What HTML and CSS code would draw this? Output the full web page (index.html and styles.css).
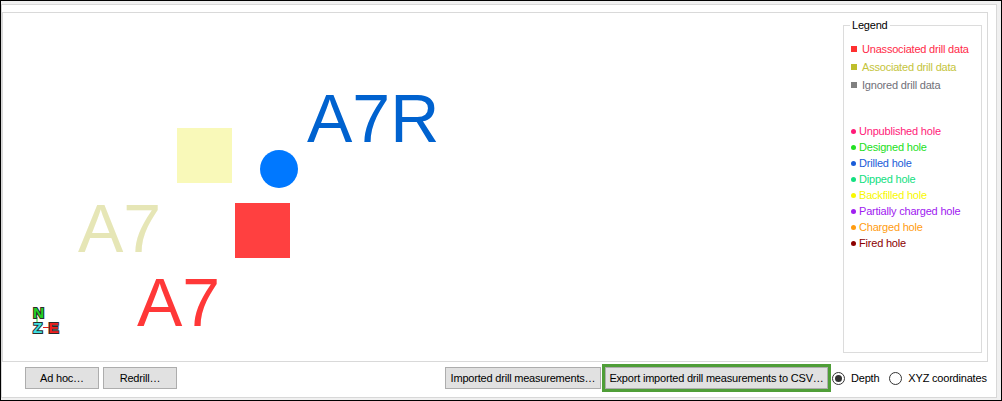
FILE: index.html
```html
<!DOCTYPE html>
<html lang="en">
<head>
<meta charset="utf-8">
<title>Drill data</title>
<link rel="stylesheet" href="styles.css">
</head>
<body>
<div class="window">
  <div class="panel">
    <div class="canvas">
      <div class="shape sq-yellow"></div>
      <div class="shape sq-red"></div>
      <div class="shape dot-blue"></div>
      <div class="label lbl-a7r">A7R</div>
      <div class="label lbl-a7-pale">A7</div>
      <div class="label lbl-a7-red">A7</div>
      <svg class="compass" width="32" height="34" viewBox="0 0 32 34">
        <line x1="7" y1="14" x2="7" y2="20" stroke="#22cc22" stroke-width="1"/>
        <line x1="13" y1="24.5" x2="19" y2="24.5" stroke="#e02020" stroke-width="1"/>
        <text x="3" y="15" class="ax ax-n">N</text>
        <text x="3" y="30" class="ax ax-z">Z</text>
        <text x="18.5" y="30" class="ax ax-e">E</text>
      </svg>

      <fieldset class="legend">
        <legend>Legend</legend>
        <ul class="keys">
          <li class="key c-unassoc"><i class="sw"></i>Unassociated drill data</li>
          <li class="key c-assoc"><i class="sw"></i>Associated drill data</li>
          <li class="key c-ignored"><i class="sw"></i>Ignored drill data</li>
        </ul>
        <ul class="keys holes">
          <li class="hole c-unpub"><i class="pt"></i>Unpublished hole</li>
          <li class="hole c-designed"><i class="pt"></i>Designed hole</li>
          <li class="hole c-drilled"><i class="pt"></i>Drilled hole</li>
          <li class="hole c-dipped"><i class="pt"></i>Dipped hole</li>
          <li class="hole c-backfill"><i class="pt"></i>Backfilled hole</li>
          <li class="hole c-partial"><i class="pt"></i>Partially charged hole</li>
          <li class="hole c-charged"><i class="pt"></i>Charged hole</li>
          <li class="hole c-fired"><i class="pt"></i>Fired hole</li>
        </ul>
      </fieldset>
    </div>

    <div class="bar">
      <button class="btn btn-adhoc">Ad hoc…</button>
      <button class="btn btn-redrill">Redrill…</button>
      <button class="btn btn-imported">Imported drill measurements…</button>
      <div class="focus-frame">
        <button class="btn btn-export">Export imported drill measurements to CSV…</button>
      </div>
      <div class="radios">
        <label class="opt"><span class="radio on"></span>Depth</label>
        <label class="opt"><span class="radio"></span>XYZ coordinates</label>
      </div>
    </div>
  </div>
</div>
</body>
</html>
```

FILE: styles.css
```css
html, body {
  margin: 0;
  padding: 0;
  background: #ffffff;
}

.window {
  box-sizing: border-box;
  width: 1002px;
  height: 401px;
  border: 1px solid #000;
  background: #f0f0f0;
  padding: 3px 4px 2px 0;
  font-family: "Liberation Sans", Arial, sans-serif;
  font-size: 11px;
  letter-spacing: -0.2px;
  color: #000;
}

.panel {
  box-sizing: border-box;
  height: 100%;
  border: 1px solid #d8d8d8;
  background: #fff;
  padding: 7px 8px 0 0;
  display: flex;
  flex-direction: column;
}

/* drawing area */
.canvas {
  position: relative;
  box-sizing: border-box;
  height: 350px;
  border: 1px solid #d9d9d9;
  padding: 6px 5px 8px;
  display: flex;
  justify-content: flex-end;
  overflow: hidden;
}

.shape {
  position: absolute;
}

.sq-yellow {
  left: 174px;
  top: 115px;
  width: 55px;
  height: 55px;
  background: #f9f9b9;
}

.sq-red {
  left: 232px;
  top: 190px;
  width: 55px;
  height: 55px;
  background: #ff4040;
}

.dot-blue {
  left: 257px;
  top: 137px;
  width: 38px;
  height: 38px;
  border-radius: 50%;
  background: #0078ff;
}

.label {
  position: absolute;
  font-family: "Liberation Sans", Arial, sans-serif;
  font-size: 68px;
  line-height: 68px;
  letter-spacing: 0;
  white-space: nowrap;
}

.lbl-a7r {
  left: 304px;
  top: 71px;
  color: #0062cf;
}

.lbl-a7-pale {
  left: 75px;
  top: 181px;
  color: #e6e6b6;
}

.lbl-a7-red {
  left: 134px;
  top: 255px;
  color: #ff3838;
}

.compass {
  position: absolute;
  left: 27px;
  top: 290px;
  overflow: visible;
}

.ax {
  font-family: "Liberation Sans", Arial, sans-serif;
  font-weight: bold;
  font-size: 15.5px;
  letter-spacing: 0;
  stroke: #2b2b2b;
  stroke-width: 2px;
  paint-order: stroke;
}

.ax-n { fill: #22d022; }
.ax-z { fill: #3ee0e0; }
.ax-e { fill: #ee2020; }

/* legend box */
.legend {
  box-sizing: border-box;
  width: 139px;
  margin: 0;
  padding: 8px 0 0;
  border: 1px solid #dcdcdc;
  position: relative;
  z-index: 1;
  background: #fff;
}

.legend legend {
  margin-left: 6px;
  padding: 0 2px;
  line-height: 13px;
  color: #000;
}

.keys {
  list-style: none;
  margin: 0;
  padding: 0;
}

.key {
  display: flex;
  align-items: center;
  height: 18px;
  line-height: 18px;
  padding-left: 7px;
  white-space: nowrap;
}

.sw {
  display: block;
  width: 6px;
  height: 6px;
  margin-right: 5px;
  background: currentColor;
}

.holes {
  margin-top: 29px;
}

.hole {
  display: flex;
  align-items: center;
  height: 16px;
  line-height: 16px;
  padding-left: 7px;
  white-space: nowrap;
}

.pt {
  display: block;
  width: 5px;
  height: 5px;
  border-radius: 50%;
  margin-right: 3px;
  background: currentColor;
}

.c-unassoc { color: #ff2a48; }
.c-unassoc .sw { background: #ff3030; }
.c-assoc { color: #c4c43c; }
.c-assoc .sw { background: #bebe2c; }
.c-ignored { color: #707078; }
.c-ignored .sw { background: #808080; }

.c-unpub { color: #ff1a78; }
.c-designed { color: #22e022; }
.c-drilled { color: #1a5cd8; }
.c-dipped { color: #12e080; }
.c-backfill { color: #f8f800; }
.c-partial { color: #a020f0; }
.c-charged { color: #ff9c10; }
.c-fired { color: #8c0000; }

/* button row */
.bar {
  flex: 1;
  display: flex;
  align-items: center;
  padding: 0 0 3px 23px;
}

.btn {
  box-sizing: border-box;
  height: 22px;
  margin: 0;
  padding: 0 3px;
  border: 1px solid #adadad;
  background: #e1e1e1;
  font-family: inherit;
  font-size: 11px;
  letter-spacing: -0.2px;
  color: #000;
  white-space: nowrap;
  border-radius: 0;
}

.btn-adhoc { width: 74px; }
.btn-redrill { width: 74px; margin-left: 4px; }
.btn-imported { width: 156px; margin-left: 268px; }

.focus-frame {
  box-sizing: border-box;
  width: 229px;
  margin-left: 1px;
  border: 3px solid #4f9e38;
  display: flex;
}

.btn-export {
  width: 100%;
}

.radios {
  display: flex;
  align-items: center;
  gap: 10px;
  margin-left: 1px;
}

.opt {
  display: flex;
  align-items: center;
  gap: 6px;
}

.radio {
  box-sizing: border-box;
  width: 13px;
  height: 13px;
  border: 1px solid #333;
  border-radius: 50%;
  background: #fff;
  display: flex;
  align-items: center;
  justify-content: center;
}

.radio.on::after {
  content: "";
  width: 7px;
  height: 7px;
  border-radius: 50%;
  background: #333;
}
```
